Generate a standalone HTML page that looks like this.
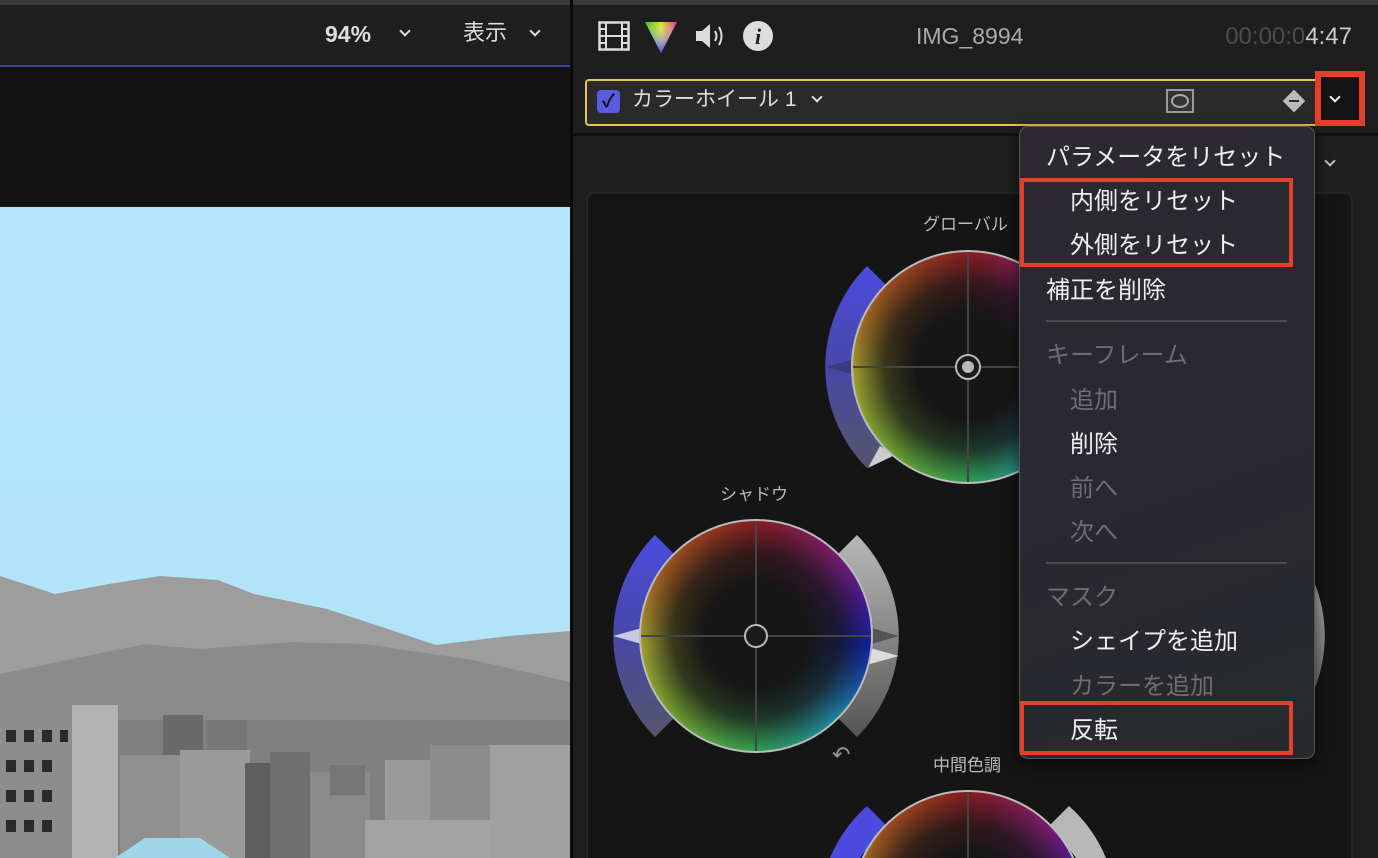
<!DOCTYPE html>
<html><head><meta charset="utf-8"><style>
*{margin:0;padding:0;box-sizing:border-box}
html,body{width:1378px;height:858px;overflow:hidden}
body{background:#1e1e1e;position:relative;font-family:"Liberation Sans","Noto Sans CJK JP",sans-serif;color:#ddd}
#root{position:absolute;left:0;top:0;width:1378px;height:858px;overflow:hidden}
.a{position:absolute}
.t{position:absolute;white-space:nowrap;line-height:1}
.wheel{position:absolute;width:234px;height:234px;border-radius:50%;border:2px solid #bbb;
background:radial-gradient(closest-side,#161616 45%,rgba(22,22,22,.75) 72%,rgba(22,22,22,0) 100%),
conic-gradient(#8a1c20 0deg,#7a1c70 45deg,#4a1a90 70deg,#1020a0 95deg,#2080a0 135deg,#30a050 180deg,#70a030 225deg,#a0a030 265deg,#a06020 300deg,#8a1c20 360deg)}
.wheel:before,.wheel:after{content:"";position:absolute;background:#444}
.wheel:before{left:50%;top:0;bottom:0;width:2px;margin-left:-1px}
.wheel:after{top:50%;left:0;right:0;height:2px;margin-top:-1px}
.mi{position:absolute;font-size:24px;white-space:nowrap;line-height:1}
.chev{position:absolute;width:8px;height:8px;border-right:2px solid #ddd;border-bottom:2px solid #ddd;transform:rotate(45deg)}
</style></head><body><div id="root">
<div class="a" style="left:0;top:0;width:1378px;height:5px;background:#3a3a3a"></div>
<div class="a" style="left:0;top:5px;width:570px;height:61px;background:#1f1f1f"></div>
<div class="t" style="left:325px;top:23px;font-size:23px;font-weight:bold;color:#ddd">94%</div>
<div class="chev" style="left:401px;top:27px"></div>
<div class="t" style="left:463px;top:22px;font-size:22px;color:#ddd">表示</div>
<div class="chev" style="left:531px;top:27px"></div>
<div class="a" style="left:0;top:65px;width:570px;height:2px;background:#4040a0"></div>
<div class="a" style="left:0;top:67px;width:570px;height:140px;background:#131313"></div>
<svg class="a" style="left:0;top:207px" width="570" height="651" viewBox="0 207 570 651">
<defs><linearGradient id="sky" x1="0" y1="0" x2="0" y2="1"><stop offset="0" stop-color="#b4e7fb"/><stop offset="1" stop-color="#b0e3f7"/></linearGradient></defs>
<rect x="0" y="207" width="570" height="651" fill="url(#sky)"/>
<polygon fill="#9d9d9d" points="0,576 55,594 109,584 160,576 218,580 254,594 327,609 382,627 436,645 509,636 570,631 570,858 0,858"/>
<polygon fill="#8b8b8b" points="0,674 145,644 200,649 291,642 364,644 473,660 570,682 570,858 0,858"/>
<rect x="0" y="720" width="570" height="138" fill="#808080"/>
<rect x="163" y="715" width="40" height="45" fill="#6a6a6a"/>
<rect x="207" y="720" width="40" height="45" fill="#777"/>
<rect x="120" y="755" width="60" height="103" fill="#8f8f8f"/>
<rect x="180" y="750" width="70" height="108" fill="#9a9a9a"/>
<rect x="245" y="763" width="25" height="95" fill="#5e5e5e"/>
<rect x="270" y="752" width="40" height="106" fill="#6f6f6f"/>
<rect x="310" y="772" width="60" height="86" fill="#8a8a8a"/>
<rect x="330" y="765" width="35" height="30" fill="#757575"/>
<rect x="385" y="760" width="50" height="98" fill="#999"/>
<rect x="430" y="745" width="80" height="113" fill="#8c8c8c"/>
<rect x="490" y="745" width="80" height="113" fill="#a0a0a0"/>
<rect x="365" y="820" width="125" height="38" fill="#a3a3a3"/>
<rect x="0" y="705" width="118" height="153" fill="#b2b2b2"/>
<rect x="0" y="705" width="72" height="153" fill="#8d8d8d"/>
<g fill="#2a2a2a"><rect x="6" y="730" width="10" height="12"/><rect x="24" y="730" width="10" height="12"/><rect x="42" y="730" width="10" height="12"/><rect x="60" y="730" width="8" height="12"/><rect x="6" y="760" width="10" height="12"/><rect x="24" y="760" width="10" height="12"/><rect x="42" y="760" width="10" height="12"/><rect x="6" y="790" width="10" height="12"/><rect x="24" y="790" width="10" height="12"/><rect x="42" y="790" width="10" height="12"/><rect x="6" y="820" width="10" height="12"/><rect x="24" y="820" width="10" height="12"/><rect x="42" y="820" width="10" height="12"/></g>
<polygon fill="#9fd7e8" points="115,858 145,838 200,838 230,858"/>
</svg>
<div class="a" style="left:570px;top:0;width:3px;height:858px;background:#0a0a0a"></div>
<div class="a" style="left:573px;top:5px;width:805px;height:853px;background:#1e1e1e"></div>
<svg class="a" style="left:598px;top:21px" width="32" height="30" viewBox="0 0 32 30"><rect x="1.5" y="1.5" width="29" height="27" fill="none" stroke="#ddd" stroke-width="2.5"/><line x1="8" y1="1" x2="8" y2="29" stroke="#ddd" stroke-width="2"/><line x1="24" y1="1" x2="24" y2="29" stroke="#ddd" stroke-width="2"/><g stroke="#ddd" stroke-width="2"><line x1="1" y1="8" x2="8" y2="8"/><line x1="1" y1="15" x2="8" y2="15"/><line x1="1" y1="22" x2="8" y2="22"/><line x1="24" y1="8" x2="31" y2="8"/><line x1="24" y1="15" x2="31" y2="15"/><line x1="24" y1="22" x2="31" y2="22"/><line x1="8" y1="15" x2="24" y2="15"/></g></svg>
<svg class="a" style="left:644px;top:20px" width="34" height="34" viewBox="0 0 34 34"><defs><linearGradient id="g1" x1="0" y1="0" x2="1" y2="0"><stop offset="0" stop-color="#30c030"/><stop offset=".5" stop-color="#e0e020"/><stop offset="1" stop-color="#e03090"/></linearGradient><linearGradient id="g2" x1="0" y1="0" x2="0" y2="1"><stop offset="0" stop-color="#fff" stop-opacity="0"/><stop offset="1" stop-color="#4040ff"/></linearGradient></defs><polygon points="1,2 33,2 17,33" fill="url(#g1)"/><polygon points="1,2 33,2 17,33" fill="url(#g2)"/></svg>
<svg class="a" style="left:694px;top:22px" width="34" height="28" viewBox="0 0 34 28"><polygon points="2,9 8,9 16,2 16,26 8,19 2,19" fill="#ddd"/><path d="M21 9 Q24 14 21 19" stroke="#ddd" stroke-width="2" fill="none"/><path d="M25 5 Q30 14 25 23" stroke="#ddd" stroke-width="2" fill="none"/></svg>
<div class="a" style="left:743px;top:21px;width:30px;height:30px;border-radius:50%;background:#ddd;color:#1e1e1e;font:italic bold 22px 'Liberation Serif',serif;text-align:center;line-height:31px">i</div>
<div class="t" style="left:916px;top:25px;font-size:23px;color:#aaa">IMG_8994</div>
<div class="t" style="right:26px;top:25px;font-size:24px;color:#4c4c4c">00:00:0<span style="color:#ccc">4:47</span></div>
<div class="a" style="left:585px;top:79px;width:771px;height:47px;background:#2a2a2a;border:2px solid #e6c64a;border-radius:4px"></div>
<div class="a" style="left:597px;top:90px;width:23px;height:23px;background:#5a5ae6;border-radius:4px;color:#111;font-size:18px;text-align:center;line-height:23px;font-weight:bold">✓</div>
<div class="t" style="left:632px;top:89px;font-size:21px;color:#ddd">カラーホイール 1</div>
<div class="chev" style="left:813px;top:93px"></div>
<div class="a" style="left:1166px;top:89px;width:28px;height:24px;border:2px solid #999;background:#333"><div style="margin:3px auto;width:18px;height:14px;border:2px solid #aaa;border-radius:50%"></div></div>
<div class="a" style="left:1286px;top:93px;width:16px;height:16px;background:#bbb;transform:rotate(45deg)"></div>
<div class="a" style="left:1289px;top:100px;width:10px;height:2px;background:#2a2a2a"></div>
<div class="a" style="left:1315px;top:71px;width:50px;height:55px;border:6px solid #e2402a;background:#151515"></div>
<div class="chev" style="left:1331px;top:93px;border-color:#eee"></div>
<div class="a" style="left:573px;top:133px;width:805px;height:3px;background:#111"></div>
<div class="chev" style="left:1326px;top:157px;border-color:#bbb"></div>
<div class="a" style="left:586px;top:192px;width:767px;height:666px;background:#151515;border:2px solid #262626;border-bottom:none;border-radius:8px 8px 0 0"></div>
<svg class="a" style="left:573px;top:136px" width="805" height="722" viewBox="573 136 805 722">
<defs>
<linearGradient id="bl" x1="0" y1="0" x2="0" y2="1"><stop offset="0" stop-color="#4b4be0"/><stop offset=".5" stop-color="#4848a8"/><stop offset="1" stop-color="#55556a"/></linearGradient>
<linearGradient id="gr" x1="0" y1="0" x2="0" y2="1"><stop offset="0" stop-color="#b8b8b8"/><stop offset="1" stop-color="#555"/></linearGradient>
</defs>
<path d="M655 535 A143 143 0 0 0 655 737 L678 714 A110 110 0 0 1 678 558 Z" fill="url(#bl)"/>
<path d="M857 535 A143 143 0 0 1 857 737 L834 714 A110 110 0 0 0 834 558 Z" fill="url(#gr)"/>
<polygon points="613,636 642,628 642,644" fill="#c8c8e0"/>
<polygon points="899,636 872,628 872,644" fill="#555"/>
<polygon points="899,656 870,648 870,664" fill="#ddd"/>
<path d="M867 266 A143 143 0 0 0 867 468 L890 445 A110 110 0 0 1 890 289 Z" fill="url(#bl)"/>
<polygon points="826,367 855,359 855,375" fill="#3a3a80"/>
<polygon points="868,468 880,446 895,455" fill="#ccc"/>
<path d="M867 806 A143 143 0 0 0 830 858 L860 858 A110 110 0 0 1 890 829 Z" fill="#4b4be0"/>
<path d="M1069 806 A143 143 0 0 1 1106 858 L1076 858 A110 110 0 0 0 1046 829 Z" fill="#b8b8b8"/>
<path d="M1283 535 A143 143 0 0 1 1283 737 L1260 714 A110 110 0 0 0 1260 558 Z" fill="url(#gr)"/>
</svg>
<div class="wheel" style="left:639px;top:519px"></div>
<div class="a" style="left:744px;top:624px;width:24px;height:24px;border-radius:50%;border:2px solid #bbb;background:#1a1a1a"></div>
<div class="wheel" style="left:851px;top:250px"></div>
<div class="a" style="left:955px;top:354px;width:26px;height:26px;border-radius:50%;border:2px solid #bbb;background:#1a1a1a"><div style="margin:5px;width:12px;height:12px;border-radius:50%;background:#bbb"></div></div>
<div class="a" style="left:851px;top:790px;width:234px;height:68px;overflow:hidden"><div class="wheel" style="left:0;top:0"></div></div>
<div class="t" style="left:923px;top:216px;font-size:17px;color:#bbb">グローバル</div>
<div class="t" style="left:720px;top:486px;font-size:17px;color:#bbb">シャドウ</div>
<div class="t" style="left:933px;top:757px;font-size:17px;color:#bbb">中間色調</div>
<div class="t" style="left:832px;top:744px;font-size:22px;color:#999">↶</div>
<div class="a" style="left:1019px;top:126px;width:296px;height:633px;border-radius:9px;border:1px solid #555;background:linear-gradient(160deg,#2c2a30,#2a2830 50%,#272a2c);box-shadow:0 4px 14px rgba(0,0,0,.6)"></div>
<div class="mi" style="left:1046px;top:146px;color:#eee">パラメータをリセット</div>
<div class="mi" style="left:1070px;top:190px;color:#eee">内側をリセット</div>
<div class="mi" style="left:1070px;top:234px;color:#eee">外側をリセット</div>
<div class="mi" style="left:1046px;top:279px;color:#eee">補正を削除</div>
<div class="a" style="left:1046px;top:320px;width:241px;height:2px;background:#4a4a4e"></div>
<div class="mi" style="left:1046px;top:344px;color:#6e6e72">キーフレーム</div>
<div class="mi" style="left:1070px;top:389px;color:#6e6e72">追加</div>
<div class="mi" style="left:1070px;top:433px;color:#eee">削除</div>
<div class="mi" style="left:1070px;top:477px;color:#6e6e72">前へ</div>
<div class="mi" style="left:1070px;top:521px;color:#6e6e72">次へ</div>
<div class="a" style="left:1046px;top:562px;width:241px;height:2px;background:#4a4a4e"></div>
<div class="mi" style="left:1046px;top:586px;color:#6e6e72">マスク</div>
<div class="mi" style="left:1070px;top:630px;color:#eee">シェイプを追加</div>
<div class="mi" style="left:1070px;top:675px;color:#6e6e72">カラーを追加</div>
<div class="mi" style="left:1070px;top:719px;color:#eee">反転</div>
<div class="a" style="left:1020px;top:178px;width:273px;height:89px;border:4px solid #e2402a"></div>
<div class="a" style="left:1020px;top:701px;width:273px;height:54px;border:4px solid #e2402a"></div>
</div></body></html>
